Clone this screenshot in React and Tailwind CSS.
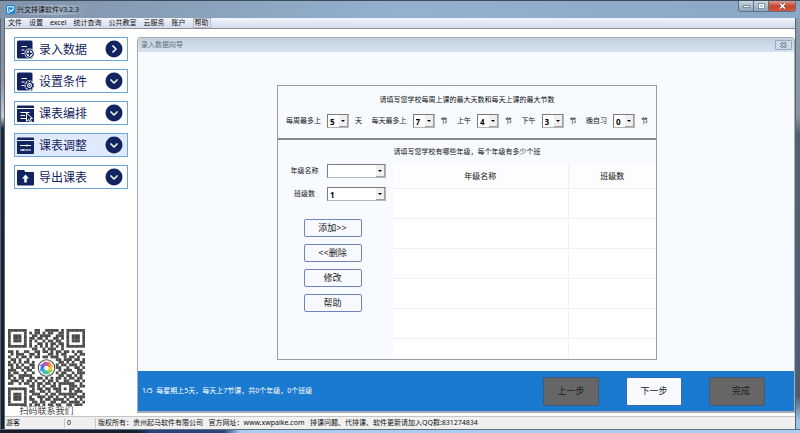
import React, { useState } from 'react';

const menuItems = ['文件', '设置', 'excel', '统计查询', '公共教室', '云服务', '账户'];

const navItems = [
  { id: 'input', label: '录入数据', open: true },
  { id: 'rules', label: '设置条件' },
  { id: 'arrange', label: '课表编排' },
  { id: 'adjust', label: '课表调整', active: true },
  { id: 'export', label: '导出课表' },
];

const lessonFields = [
  { id: 'days', label: '每周最多上', value: '5', unit: '天' },
  { id: 'perDay', label: '每天最多上', value: '7', unit: '节' },
  { id: 'morning', label: '上午', value: '4', unit: '节' },
  { id: 'afternoon', label: '下午', value: '3', unit: '节' },
  { id: 'evening', label: '晚自习', value: '0', unit: '节' },
];

const qrRows = [
  '11111110001100111110101111111',
  '10000010101101011001101000001',
  '10111010011011110011101011101',
  '10111010110110100110101011101',
  '10111010101001011011001011101',
  '10000010100110101101101000001',
  '11111110101010101010101111111',
  '00000000011001011100100000000',
  '11010011001101101011011010110',
  '01011100110100011010110001011',
  '10010110101101101110010110100',
  '01101001000000000011011101101',
  '10101011010000000001101010011',
  '11010100110000000010110111010',
  '01011011010000000011001001101',
  '11100101100000000001011100110',
  '10110010010000000010110010111',
  '11001111100000000001101101010',
  '10101100110110101011010110110',
  '01110101101001011010011001101',
  '11001011010110110101111110010',
  '00000000110101001101000111011',
  '11111110010110110111010110100',
  '10000010110011010011000101110',
  '10111010011100101101111111001',
  '10111010100111011010010110111',
  '10111010110010110111101001010',
  '10000010011011001100110111101',
  '11111110101101011011001101110',
];

function AppLogo() {
  return (
    <svg viewBox="0 0 16 16" className="size-[9px]">
      <rect width="16" height="16" rx="2" fill="#1b87d8" />
      <path d="M13 6V3H3v10h4" fill="none" stroke="#fff" strokeWidth="1.8" />
      <path d="M6 8l3 3.500 5-5" fill="none" stroke="#fff" strokeWidth="2" />
    </svg>
  );
}

function NavIcon({ id }) {
  const navy = '#12245f';
  if (id === 'export') {
    return (
      <svg viewBox="0 0 34 38" className="w-[17px] h-[19px]">
        <path d="M0 6a2 2 0 0 1 2-2h12l3 4h15a2 2 0 0 1 2 2v23a2 2 0 0 1-2 2H2a2 2 0 0 1-2-2z" fill={navy} />
        <path d="M17 13l7 8h-4.500v8h-5v-8H10z" fill="#fff" />
      </svg>
    );
  }
  if (id === 'adjust' || id === 'arrange') {
    return (
      <svg viewBox="0 0 34 38" className="w-[17px] h-[19px]">
        <path d="M0 8V5a2 2 0 0 1 2-2h30a2 2 0 0 1 2 2v3zM0 10h34v24a2 2 0 0 1-2 2H2a2 2 0 0 1-2-2z" fill={navy} />
        {id === 'adjust' ? (
          <path d="M6 19h22M6 28h22M20 17v4M12 26v4" stroke="#fff" strokeWidth="2" />
        ) : (
          <>
            <path d="M7 17h18M7 23h9M7 29h11" stroke="#fff" strokeWidth="2" />
            <path d="M19 18l12 11-5 .5 3 6-3 1.500-3-6-4 3.500z" fill={navy} stroke="#fff" strokeWidth="2" />
          </>
        )}
      </svg>
    );
  }
  return (
    <svg viewBox="0 0 34 38" className="w-[17px] h-[19px]">
      <path d="M0 4a3 3 0 0 1 3-3h25a3 3 0 0 1 3 3v31a2 2 0 0 1-2 2H3a3 3 0 0 1-3-3z" fill={navy} />
      <path d="M9 13h11M9 20h6M9 27h5" stroke="#fff" strokeWidth="2.400" />
      <circle cx="25" cy="27" r="10" fill="#fff" />
      {id === 'input' ? (
        <>
          <circle cx="25" cy="27" r="7.500" fill="#fff" stroke={navy} strokeWidth="2.500" />
          <path d="M25 22v10M20 27h10" stroke={navy} strokeWidth="2.600" />
        </>
      ) : (
        <>
          <circle cx="25" cy="27" r="7.500" fill="none" stroke={navy} strokeWidth="3" strokeDasharray="3.500 2.390" />
          <circle cx="25" cy="27" r="6" fill="none" stroke={navy} strokeWidth="2.400" />
          <circle cx="25" cy="27" r="2" fill="none" stroke={navy} strokeWidth="2" />
        </>
      )}
    </svg>
  );
}

function NavArrow({ open }) {
  return (
    <svg viewBox="0 0 36 36" className="size-[18px]">
      <circle cx="18" cy="18" r="17" fill="#12245f" />
      <path
        d={open ? 'M15 11l7 7-7 7' : 'M11 15l7 7 7-7'}
        fill="none"
        stroke="#fff"
        strokeWidth="3"
      />
    </svg>
  );
}

function QrCode() {
  const petals = ['#f2523c', '#f7943a', '#f4cd35', '#8fd14b', '#3fc48a', '#38b4ea', '#4a73ea', '#a05ae0'];
  return (
    <svg viewBox="0 0 29 29" className="size-[77px]" role="img">
      {qrRows.map((row, y) =>
        row.split('').map((cell, x) =>
          cell === '1' ? (
            <rect key={`${x}-${y}`} x={x} y={y} width="1.05" height="1.05" fill="#4a4a4a" />
          ) : null
        )
      )}
      <circle cx="14.500" cy="14.700" r="3.100" fill="#fff" stroke="#4a4a4a" strokeWidth="0.400" />
      {petals.map((color, i) => (
        <path
          key={color}
          d="M14 12.700l1.500.2-.3.900z"
          fill={color}
          stroke={color}
          strokeWidth="0.600"
          transform={`rotate(${i * 45} 14.5 14.7)`}
        />
      ))}
    </svg>
  );
}

function ComboBox({ id, value, options, onChange, className }) {
  return (
    <div className={`relative h-[14px] ${className}`}>
      <select
        id={id}
        value={value}
        onChange={e => onChange(e.target.value)}
        className="block size-full appearance-none rounded-none border border-t-[#7c7c7c] border-l-[#7c7c7c] border-r-[#b5b5b5] border-b-[#b5b5b5] bg-white pl-[2px] text-[8px] leading-[11px] font-bold text-black outline-none"
      >
        {options.map(option => (
          <option key={option} value={option}>{option}</option>
        ))}
      </select>
      <span className="pointer-events-none absolute top-px right-px bottom-px flex w-[9px] items-center justify-center border-r border-b border-[#a0a0a0] bg-[#efefef]">
        <svg viewBox="0 0 4 2" className="w-[4px] h-[2px]">
          <path d="M0 0h4L2 2z" fill="#000" />
        </svg>
      </span>
    </div>
  );
}

function WindowButtons() {
  return (
    <div className="mr-1 flex h-[11px] self-start overflow-hidden rounded-b-[3px] border border-t-0 border-[#5d7184]">
      <button type="button" aria-label="最小化" className="flex w-[15px] items-center justify-center border-r border-[#5d7184] bg-linear-to-b from-[#c9d6e2] to-[#8fa5b9]">
        <span className="h-[3px] w-[7px] border border-[#7b8896] bg-white" />
      </button>
      <button type="button" aria-label="最大化" className="flex w-[15px] items-center justify-center border-r border-[#5d7184] bg-linear-to-b from-[#c9d6e2] to-[#8fa5b9]">
        <svg viewBox="0 0 14 12" className="w-[7px] h-[6px]">
          <rect x="1" y="1" width="12" height="10" fill="#fff" stroke="#6f7d8b" strokeWidth="1.500" />
          <rect x="5" y="5" width="4" height="2" fill="#596979" />
        </svg>
      </button>
      <button type="button" aria-label="关闭" className="flex w-[26px] items-center justify-center bg-linear-to-b from-[#dd9a8c] via-[#c8432c] to-[#d4573c]">
        <svg viewBox="0 0 14 12" className="w-[7px] h-[6px]">
          <path d="M2 1l10 10M12 1L2 11" stroke="#5d4548" strokeWidth="5" />
          <path d="M2 1l10 10M12 1L2 11" stroke="#fff" strokeWidth="3" />
        </svg>
      </button>
    </div>
  );
}

function Sidebar() {
  return (
    <aside className="flex w-[132px] shrink-0 flex-col justify-between">
      <nav className="flex flex-col gap-2 pt-2 pr-[9px] pl-[9px]">
        {navItems.map(item => (
          <button
            key={item.id}
            type="button"
            className={`flex h-6 items-center border border-[#6aa5dc] pr-1 pl-[2px] text-[12px] text-[#12245f] ${
              item.active ? 'bg-[#e0eafc]' : 'bg-white'
            }`}
          >
            <NavIcon id={item.id} />
            <span className="flex-1 pt-px pl-[5px] text-left leading-[20px]">{item.label}</span>
            <NavArrow open={item.open} />
          </button>
        ))}
      </nav>
      <figure className="flex w-[83px] flex-col items-center">
        <QrCode />
        <figcaption className="font-['Liberation_Serif','Noto_Sans_CJK_SC',serif] text-[9px] leading-[10px] text-[#444]">
          扫码联系我们
        </figcaption>
      </figure>
    </aside>
  );
}

function LessonSettings() {
  const [values, setValues] = useState(
    Object.fromEntries(lessonFields.map(field => [field.id, field.value]))
  );

  return (
    <section className="h-[54px] border-b-2 border-[#858789] px-2 pt-2">
      <p className="text-center leading-[12px]">请填写您学校每周上课的最大天数和每天上课的最大节数</p>
      <div className="flex items-center justify-between pt-2">
        {lessonFields.map(field => (
          <div key={field.id} className="flex items-center gap-[6px]">
            <label htmlFor={field.id}>{field.label}</label>
            <ComboBox
              id={field.id}
              value={values[field.id]}
              options={['0', '1', '2', '3', '4', '5', '6', '7']}
              onChange={value => setValues(prev => ({ ...prev, [field.id]: value }))}
              className="w-[22px]"
            />
            <span>{field.unit}</span>
          </div>
        ))}
      </div>
    </section>
  );
}

function GradeSettings() {
  const [grade, setGrade] = useState('');
  const [classes, setClasses] = useState('1');

  return (
    <section className="flex flex-1 flex-col pt-[6px]">
      <p className="text-center leading-[12px]">请填写您学校有哪些年级，每个年级有多少个班</p>
      <div className="flex flex-1 pt-[6px]">
        <div className="w-[115px] shrink-0">
          <div className="flex flex-col gap-[9px]">
            <div className="flex items-center">
              <label htmlFor="grade" className="w-[49px] pl-1 text-center">年级名称</label>
              <ComboBox id="grade" value={grade} options={['', '一年级', '二年级']} onChange={setGrade} className="w-[59px]" />
            </div>
            <div className="flex items-center">
              <label htmlFor="classes" className="w-[49px] pl-1 text-center">班级数</label>
              <ComboBox id="classes" value={classes} options={['1', '2', '3', '4']} onChange={setClasses} className="w-[59px]" />
            </div>
          </div>
          <div className="flex flex-col items-center gap-[7px] pt-[18px] pr-[6px]">
            {['添加>>', '<<删除', '修改', '帮助'].map(label => (
              <button
                key={label}
                type="button"
                className="h-[18px] w-[58px] rounded-[2px] border border-[#6f86b8] bg-[#f8faff] text-[9px] leading-[16px] text-[#222]"
              >
                {label}
              </button>
            ))}
          </div>
        </div>
        <table className="h-[194px] flex-1 table-fixed border-collapse bg-white text-[8px]">
          <thead>
            <tr className="h-6 bg-[#fdfdff]">
              <th className="w-[175px] border-r border-b border-[#efeff1] font-normal">年级名称</th>
              <th className="border-b border-[#efeff1] font-normal">班级数</th>
            </tr>
          </thead>
          <tbody>
            {[1, 2, 3, 4, 5].map(row => (
              <tr key={row} className="h-[30px]">
                <td className="border-r border-b border-[#f1f1f3]"></td>
                <td className="border-b border-[#f1f1f3]"></td>
              </tr>
            ))}
            <tr>
              <td className="border-r border-[#f1f1f3]"></td>
              <td></td>
            </tr>
          </tbody>
        </table>
      </div>
    </section>
  );
}

function WizardPanel() {
  return (
    <main className="mt-2 mb-[3px] flex flex-1 flex-col rounded-t-[4px] border border-b-2 border-[#a5acb3] bg-[#f7faff]">
      <header className="flex h-[14px] items-center justify-between rounded-t-[3px] bg-linear-to-b from-[#c3d0dd] to-[#d6e4f1] pr-[2px] pl-[3px] text-[#5e6b77]">
        <h1>录入数据向导</h1>
        <button type="button" aria-label="关闭向导" className="flex h-[10px] w-[17px] items-center justify-center rounded-[1px] border border-[#98a9bd] bg-[#cbd9e8]">
          <svg viewBox="0 0 14 12" className="w-[7px] h-[6px]">
            <path d="M2 1l10 10M12 1L2 11" stroke="#66717c" strokeWidth="5" />
            <path d="M2 1l10 10M12 1L2 11" stroke="#fff" strokeWidth="2" />
          </svg>
        </button>
      </header>
      <div className="flex flex-1 justify-center pt-[33px] pb-[11px] pl-[2px]">
        <div className="flex w-[380px] flex-col border border-[#9a9c9e]">
          <LessonSettings />
          <GradeSettings />
        </div>
      </div>
      <footer className="flex h-10 items-center justify-between bg-[#1a7ad0] pr-[29px] pl-1 text-white">
        <p>1/5&nbsp; 每星期上5天，每天上7节课，共0个年级，0个班级</p>
        <div className="flex gap-[27px] text-[9px] text-[#222]">
          <button type="button" className="h-[29px] w-14 rounded-[2px] border border-[#3d5878] bg-[#666]">上一步</button>
          <button type="button" className="h-[29px] w-14 rounded-[2px] border border-[#2f6db5] bg-[#f8faff]">下一步</button>
          <button type="button" className="h-[29px] w-14 rounded-[2px] border border-[#3d5878] bg-[#666] pl-2">完成</button>
        </div>
      </footer>
    </main>
  );
}

function App() {
  return (
    <div className="flex min-h-screen flex-col bg-[#101a2b] font-['Noto_Sans','Noto_Sans_CJK_SC',sans-serif] text-[7px] leading-[10px] text-[#111]">
      <header className="flex h-[18px] items-center justify-between border-t border-[#3d4b5a] bg-linear-to-r from-[#8193a9] via-[#93b0cf] to-[#8aa7c6] pl-[6px]">
        <div className="flex items-center gap-[2px]">
          <AppLogo />
          <span className="bg-linear-to-r from-white/5 via-white/30 to-white/0 pr-2">兴文排课软件V3.2.3</span>
        </div>
        <WindowButtons />
      </header>
      <div className="flex flex-1">
        <div className="w-[5px] shrink-0 border-x border-[#5b6675] bg-[linear-gradient(to_bottom,#8193a9_0%,#8d93a3_15%,#c5cad6_24%,#182638_27%,#16202f_100%)]" />
        <div className="flex flex-1 flex-col bg-white">
          <div className="flex h-[11px] items-center border-b border-[#8e9096] bg-linear-to-b from-[#f2f4fb] to-[#d3dbee] pl-[3px]">
            {menuItems.map(item => (
              <button key={item} type="button" className="pr-[7px]">{item}</button>
            ))}
            <button type="button" className="border border-[#b5bac6] bg-[#e4e8f2] px-px leading-[8px]">帮助</button>
          </div>
          <div className="flex flex-1">
            <Sidebar />
            <WizardPanel />
          </div>
          <footer className="flex h-[13px] items-center border-t border-[#c4c4c4] bg-[#f0f0f0]">
            <span className="w-[60px] border-r border-[#c8c8c8] pl-px">游客</span>
            <span className="w-[31px] border-r border-[#c8c8c8] pl-[2px]">0</span>
            <span className="pl-[2px] whitespace-pre">版权所有：贵州起马软件有限公司   官方网址：www.xwpaike.com   排课问题、代排课、软件更新请加入QQ群:831274834</span>
          </footer>
        </div>
        <div className="w-[5px] shrink-0 border-l border-[#566575] bg-[linear-gradient(to_bottom,#8c9cae_0%,#8793a1_24%,#53606f_28%,#4c5d72_92%,#9cc3e8_98%)]" />
      </div>
      <div className="h-1 border-t border-[#5f6f80] bg-[linear-gradient(to_right,#1a1c28_0%,#16202f_17%,#29457c_19%,#29457c_28%,#a8cdf0_30%,#a8cdf0_100%)]" />
    </div>
  );
}

export default App;
